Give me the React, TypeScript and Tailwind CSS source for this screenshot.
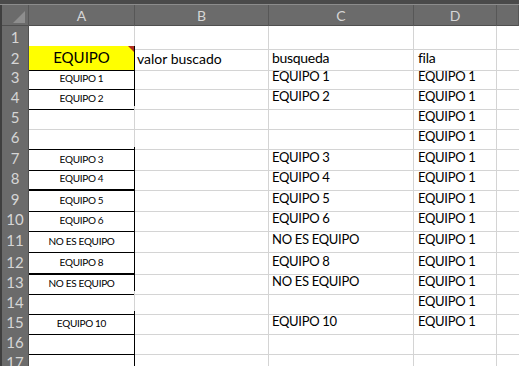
import React from 'react';

type Row = { a?: string; b?: string; c?: string; d?: string; h: number; aCls: string };

const GRID = 'border-[#d4d4d4]';

const rows: Row[] = [
  { h: 20, aCls: 'border-r border-b border-r-[#d4d4d4] border-b-[#d4d4d4]' },
  { a: 'EQUIPO', b: 'valor buscado', c: 'busqueda', d: 'fila', h: 20, aCls: 'border-r border-b border-black' },
  { a: 'EQUIPO 1', c: 'EQUIPO 1', d: 'EQUIPO 1', h: 20, aCls: 'border-r border-b border-black' },
  { a: 'EQUIPO 2', c: 'EQUIPO 2', d: 'EQUIPO 1', h: 20, aCls: 'border-r border-b border-black' },
  { d: 'EQUIPO 1', h: 20, aCls: 'border-r border-b border-r-[#d4d4d4] border-b-[#d4d4d4]' },
  { d: 'EQUIPO 1', h: 21, aCls: 'border-r border-b border-r-[#d4d4d4] border-b-black' },
  { a: 'EQUIPO 3', c: 'EQUIPO 3', d: 'EQUIPO 1', h: 20, aCls: 'border-r border-b border-black' },
  { a: 'EQUIPO 4', c: 'EQUIPO 4', d: 'EQUIPO 1', h: 21, aCls: 'border-r border-b-2 border-black' },
  { a: 'EQUIPO 5', c: 'EQUIPO 5', d: 'EQUIPO 1', h: 20, aCls: 'border-r border-b border-black' },
  { a: 'EQUIPO 6', c: 'EQUIPO 6', d: 'EQUIPO 1', h: 21, aCls: 'border-r border-b border-black' },
  { a: 'NO ES EQUIPO', c: 'NO ES EQUIPO', d: 'EQUIPO 1', h: 22, aCls: 'border-r border-b border-black' },
  { a: 'EQUIPO 8', c: 'EQUIPO 8', d: 'EQUIPO 1', h: 20, aCls: 'border-r border-b-2 border-black' },
  { a: 'NO ES EQUIPO', c: 'NO ES EQUIPO', d: 'EQUIPO 1', h: 20, aCls: 'border-r border-b border-black' },
  { d: 'EQUIPO 1', h: 20, aCls: 'border-r border-b border-r-[#d4d4d4] border-b-black' },
  { a: 'EQUIPO 10', c: 'EQUIPO 10', d: 'EQUIPO 1', h: 20, aCls: 'border-r border-b border-black' },
  { h: 20, aCls: 'border-r border-b border-black' },
  { h: 20, aCls: 'border-r border-b border-black' },
];

const font = { fontFamily: 'Lato, "Open Sans", sans-serif' };

const App: React.FC = () => {
  return (
    <div className="w-[519px] h-[366px] overflow-hidden bg-white" style={font}>
      {/* top strip */}
      <div className="h-[5px] bg-[#4a4a4a] border-b border-[#8c8c8c]" />
      {/* column headers */}
      <div className="grid grid-cols-[29px_106px_134px_145px_83px_1fr] h-[21px] bg-[#6b6b6b] text-[#d6d6d6] text-[14px] border-b border-[#4f4f4f]">
        <div className="relative border-l-2 border-l-[#3f3f3f] border-r border-r-[#575757]">
          <div className="absolute right-[3px] bottom-[3px] w-0 h-0 border-l-[12px] border-l-transparent border-b-[12px] border-b-[#8e8e8e]" />
        </div>
        {['A', 'B', 'C', 'D', ''].map((l, i) => (
          <div key={i} className="flex items-center justify-center border-r border-[#575757]">{l}</div>
        ))}
      </div>
      {rows.map((r, i) => (
        <div
          key={i}
          className="grid grid-cols-[29px_106px_134px_145px_83px_1fr] text-[13px] text-black"
          style={{ height: r.h }}
        >
          <div className="flex items-center justify-center bg-[#6b6b6b] text-[#d6d6d6] text-[15px] border-l-2 border-l-[#3f3f3f] border-b border-b-[#5c5c5c] border-r border-r-[#505050]">
            {i + 1}
          </div>
          {i === 1 ? (
            <div className={`relative flex items-end justify-center pb-[1px] bg-[#ffff00] text-[15px] ${r.aCls}`}>
              EQUIPO
              <div className="absolute top-0 right-0 w-0 h-0 border-l-[6px] border-l-transparent border-t-[6px] border-t-[#b03020]" />
            </div>
          ) : (
            <div className={`flex items-end justify-center pb-[3px] text-[10px] tracking-[-0.3px] ${r.aCls}`}>{r.a}</div>
          )}
          <div className={`flex items-end pl-[2px] pb-[1px] text-[14px] border-r border-b ${GRID}`}>{r.b}</div>
          <div className={`flex items-end pl-[3px] pb-[2px] tracking-[-0.3px] border-r border-b ${GRID} ${i === 1 ? 'text-[14px] pb-[1px]' : ''}`}>{r.c}</div>
          <div className={`flex items-end pl-[4px] pb-[2px] tracking-[-0.3px] border-r border-b ${GRID} ${i === 1 ? 'text-[14px] pb-[1px]' : ''}`}>{r.d}</div>
          <div className={`border-b ${GRID}`} />
        </div>
      ))}
    </div>
  );
};

export default App;
